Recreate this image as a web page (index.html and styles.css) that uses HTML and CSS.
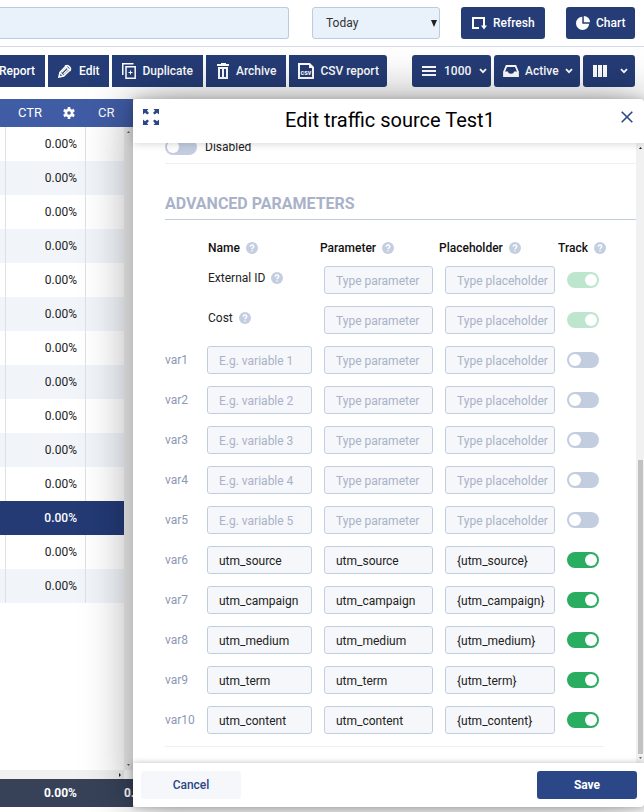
FILE: index.html
```
<!DOCTYPE html>
<html lang="en">
<head>
<meta charset="utf-8">
<title>Traffic sources</title>
<link rel="stylesheet" href="styles.css">
</head>
<body>
<svg class="sprite" aria-hidden="true">
  <symbol id="help" viewBox="0 0 12 12"><circle cx="6" cy="6" r="6" fill="#c3cfe1"/><path d="M4.2 4.7C4.2 2.4 7.8 2.5 7.8 4.6C7.8 5.9 6 5.9 6 7.3M6 8.3V9.5" fill="none" stroke="#fff" stroke-width="1.3"/></symbol>
  <symbol id="chevron" viewBox="0 0 8 6"><path d="M1 1.2L4 4.2L7 1.2" fill="none" stroke="currentColor" stroke-width="1.8"/></symbol>
</svg>

<header class="filters">
  <input class="search" type="text" aria-label="Search">
  <div class="period">
    <select aria-label="Period"><option>Today</option></select>
    <svg class="period-arrow" width="6" height="7" viewBox="0 0 6 7"><path d="M0 0H6L3 7Z" fill="#222"/></svg>
  </div>
  <button class="btn btn-refresh" type="button">
    <svg width="16" height="16" viewBox="0 0 16 16"><path d="M8 13H2V3H13V11" fill="none" stroke="#fff" stroke-width="2"/><path d="M10 10.500H16L13 14.500Z" fill="#fff"/></svg>
    Refresh
  </button>
  <button class="btn btn-chart" type="button">
    <svg width="14" height="14" viewBox="0 0 14 14"><path d="M6.300 .8A6.600 6.600 0 1 0 13.200 7.700H6.300Z" fill="#fff"/><path d="M7.800 0A6.200 6.200 0 0 1 14 6.200H7.800Z" fill="#fff"/></svg>
    Chart
  </button>
</header>

<nav class="toolbar" aria-label="Actions">
  <div class="group">
    <button class="btn btn-report" type="button">Report</button>
    <button class="btn btn-square btn-edit" type="button">
      <svg width="14" height="14" viewBox="0 0 14 14"><path d="M1 13L2 8.300L8.300 1.800C9.500 .6 13.400 4 12.200 5.700L5.700 12Z" fill="none" stroke="#fff" stroke-width="1.600"/><path d="M3.500 8.500L9 3M5.500 10L10.800 4.700M7 1.500L12.500 7M2 8.500L5.500 12" fill="none" stroke="#fff" stroke-width="1.200"/></svg>
      Edit
    </button>
    <button class="btn btn-square" type="button">
      <svg width="14" height="16" viewBox="0 0 14 16"><path d="M.75 12V.75H11.500M4 3.800H13.200V15.200H4Z" fill="none" stroke="#fff" stroke-width="1.500"/><path d="M8.500 7.500V11.500M6.500 9.500H10.500" stroke="#fff"/></svg>
      Duplicate
    </button>
    <button class="btn btn-square" type="button">
      <svg width="14" height="16" viewBox="0 0 14 16"><path d="M5 0H10V1H13V3H1V1H5ZM2 4H12V16H2ZM4 6V14H6V6ZM8 6V14H10V6Z" fill="#fff" fill-rule="evenodd"/></svg>
      Archive
    </button>
    <button class="btn btn-csv" type="button">
      <svg width="16" height="16" viewBox="0 0 16 16"><path d="M1 1H11.500L15 4.500V15H1Z" fill="none" stroke="#fff" stroke-width="2"/><path d="M11 1V5H15Z" fill="#fff"/><text class="csv-text" x="8" y="12">csv</text></svg>
      CSV report
    </button>
  </div>
  <div class="group">
    <button class="btn btn-rows" type="button">
      <svg width="14" height="12" viewBox="0 0 14 12"><path d="M0 2H14M0 6H14M0 10H14" stroke="#fff" stroke-width="2"/></svg>
      1000
      <svg class="chev" width="8" height="6"><use href="#chevron"/></svg>
    </button>
    <button class="btn btn-active" type="button">
      <svg width="16" height="12" viewBox="0 0 16 12"><path d="M3.500 1H12.500L15 7V11H1V7Z" fill="none" stroke="#fff" stroke-width="1.800"/><path d="M1 6.500H5C5 9.500 11 9.500 11 6.500H15V11.500H1Z" fill="#fff"/></svg>
      Active
      <svg class="chev" width="8" height="6"><use href="#chevron"/></svg>
    </button>
    <button class="btn btn-columns" type="button" aria-label="Columns">
      <svg width="14" height="12" viewBox="0 0 14 12"><path d="M2 0V12M7 0V12M12 0V12" stroke="#fff" stroke-width="4"/></svg>
      <svg class="chev" width="8" height="6"><use href="#chevron"/></svg>
    </button>
  </div>
</nav>

<main class="stage">
  <section class="grid-panel">
    <div class="grid-clip head-clip">
      <table class="data">
        <thead><tr><th class="lead"></th><th>CTR
          <svg class="gear" width="12" height="12" viewBox="0 0 12 12"><circle cx="6" cy="6" r="3.100" fill="none" stroke="#fff" stroke-width="2.600"/><path d="M6 0V2.500M6 9.500V12M.8 3L3 4.250M9 7.750L11.200 9M.8 9L3 7.750M9 4.250L11.200 3" stroke="#fff" stroke-width="2.600"/></svg></th><th>CR</th></tr></thead>
      </table>
    </div>
    <div class="grid-view">
      <div class="grid-clip">
        <table class="data">
          <tbody>
            <tr><td class="lead"></td><td>0.00%</td><td>0.00%</td></tr>
            <tr><td class="lead"></td><td>0.00%</td><td>0.00%</td></tr>
            <tr><td class="lead"></td><td>0.00%</td><td>0.00%</td></tr>
            <tr><td class="lead"></td><td>0.00%</td><td>0.00%</td></tr>
            <tr><td class="lead"></td><td>0.00%</td><td>0.00%</td></tr>
            <tr><td class="lead"></td><td>0.00%</td><td>0.00%</td></tr>
            <tr><td class="lead"></td><td>0.00%</td><td>0.00%</td></tr>
            <tr><td class="lead"></td><td>0.00%</td><td>0.00%</td></tr>
            <tr><td class="lead"></td><td>0.00%</td><td>0.00%</td></tr>
            <tr><td class="lead"></td><td>0.00%</td><td>0.00%</td></tr>
            <tr><td class="lead"></td><td>0.00%</td><td>0.00%</td></tr>
            <tr class="selected"><td class="lead"></td><td>0.00%</td><td>0.00%</td></tr>
            <tr><td class="lead"></td><td>0.00%</td><td>0.00%</td></tr>
            <tr><td class="lead"></td><td>0.00%</td><td>0.00%</td></tr>
          </tbody>
        </table>
      </div>
      <div class="rail rail-v">
        <svg width="3" height="2" viewBox="0 0 3 2"><path d="M0 2L1.500 0L3 2Z" fill="#666"/></svg>
        <svg width="3" height="2" viewBox="0 0 3 2"><path d="M0 0L1.500 2L3 0Z" fill="#666"/></svg>
      </div>
      <div class="rail rail-h"><svg width="2" height="4" viewBox="0 0 2 4"><path d="M0 0L2 2L0 4Z" fill="#222"/></svg></div>
    </div>
    <div class="grid-clip foot-clip">
      <table class="data">
        <tfoot><tr><td class="lead"></td><td>0.00%</td><td>0.00%</td></tr></tfoot>
      </table>
    </div>
  </section>

  <section class="dialog" role="dialog" aria-labelledby="dialog-title">
    <header class="dialog-head">
      <button class="icon-btn" type="button" aria-label="Expand">
        <svg width="16" height="16" viewBox="0 0 16 16"><g fill="#2c4788"><path d="M0 0H5.500L4 1.700L6 3.900L4.300 5.600L2 3.800L0 5.500Z"/><path d="M16 0H10.500L12 1.700L10 3.900L11.700 5.600L14 3.800L16 5.500Z"/><path d="M0 16H5.500L4 14.300L6 12.100L4.300 10.400L2 12.200L0 10.500Z"/><path d="M16 16H10.500L12 14.300L10 12.100L11.700 10.400L14 12.200L16 10.500Z"/></g></svg>
      </button>
      <h1 id="dialog-title">Edit traffic source Test1</h1>
      <button class="icon-btn" type="button" aria-label="Close">
        <svg width="12" height="12" viewBox="0 0 12 12"><path d="M.7 .7L11.300 11.300M11.300 .7L.7 11.300" stroke="#2c4788" stroke-width="1.600"/></svg>
      </button>
    </header>

    <div class="dialog-body">
      <form class="content" id="source-form">
        <label class="switch-row"><input class="switch" type="checkbox">Disabled</label>
        <h2>ADVANCED PARAMETERS</h2>
        <div class="columns">
          <span>Name <svg width="12" height="12"><use href="#help"/></svg></span>
          <span>Parameter <svg width="12" height="12"><use href="#help"/></svg></span>
          <span>Placeholder <svg width="12" height="12"><use href="#help"/></svg></span>
          <span>Track <svg width="12" height="12"><use href="#help"/></svg></span>
        </div>
        <div class="params">
          <div class="param"><span class="fixed-name">External ID <svg width="12" height="12"><use href="#help"/></svg></span><input type="text" placeholder="Type parameter" aria-label="External ID parameter"><input type="text" placeholder="Type placeholder" aria-label="External ID placeholder"><input class="switch" type="checkbox" checked disabled aria-label="Track External ID"></div>
          <div class="param"><span class="fixed-name">Cost <svg width="12" height="12"><use href="#help"/></svg></span><input type="text" placeholder="Type parameter" aria-label="Cost parameter"><input type="text" placeholder="Type placeholder" aria-label="Cost placeholder"><input class="switch" type="checkbox" checked disabled aria-label="Track Cost"></div>
          <div class="param"><label for="v1">var1</label><input id="v1" type="text" placeholder="E.g. variable 1"><input type="text" placeholder="Type parameter" aria-label="var1 parameter"><input type="text" placeholder="Type placeholder" aria-label="var1 placeholder"><input class="switch" type="checkbox" aria-label="Track var1"></div>
          <div class="param"><label for="v2">var2</label><input id="v2" type="text" placeholder="E.g. variable 2"><input type="text" placeholder="Type parameter" aria-label="var2 parameter"><input type="text" placeholder="Type placeholder" aria-label="var2 placeholder"><input class="switch" type="checkbox" aria-label="Track var2"></div>
          <div class="param"><label for="v3">var3</label><input id="v3" type="text" placeholder="E.g. variable 3"><input type="text" placeholder="Type parameter" aria-label="var3 parameter"><input type="text" placeholder="Type placeholder" aria-label="var3 placeholder"><input class="switch" type="checkbox" aria-label="Track var3"></div>
          <div class="param"><label for="v4">var4</label><input id="v4" type="text" placeholder="E.g. variable 4"><input type="text" placeholder="Type parameter" aria-label="var4 parameter"><input type="text" placeholder="Type placeholder" aria-label="var4 placeholder"><input class="switch" type="checkbox" aria-label="Track var4"></div>
          <div class="param"><label for="v5">var5</label><input id="v5" type="text" placeholder="E.g. variable 5"><input type="text" placeholder="Type parameter" aria-label="var5 parameter"><input type="text" placeholder="Type placeholder" aria-label="var5 placeholder"><input class="switch" type="checkbox" aria-label="Track var5"></div>
          <div class="param"><label for="v6">var6</label><input id="v6" type="text" value="utm_source"><input type="text" value="utm_source" aria-label="var6 parameter"><input type="text" value="{utm_source}" aria-label="var6 placeholder"><input class="switch" type="checkbox" checked aria-label="Track var6"></div>
          <div class="param"><label for="v7">var7</label><input id="v7" type="text" value="utm_campaign"><input type="text" value="utm_campaign" aria-label="var7 parameter"><input type="text" value="{utm_campaign}" aria-label="var7 placeholder"><input class="switch" type="checkbox" checked aria-label="Track var7"></div>
          <div class="param"><label for="v8">var8</label><input id="v8" type="text" value="utm_medium"><input type="text" value="utm_medium" aria-label="var8 parameter"><input type="text" value="{utm_medium}" aria-label="var8 placeholder"><input class="switch" type="checkbox" checked aria-label="Track var8"></div>
          <div class="param"><label for="v9">var9</label><input id="v9" type="text" value="utm_term"><input type="text" value="utm_term" aria-label="var9 parameter"><input type="text" value="{utm_term}" aria-label="var9 placeholder"><input class="switch" type="checkbox" checked aria-label="Track var9"></div>
          <div class="param"><label for="v10">var10</label><input id="v10" type="text" value="utm_content"><input type="text" value="utm_content" aria-label="var10 parameter"><input type="text" value="{utm_content}" aria-label="var10 placeholder"><input class="switch" type="checkbox" checked aria-label="Track var10"></div>
        </div>
      </form>
      <div class="scrollbar">
        <svg width="3" height="2" viewBox="0 0 3 2"><path d="M0 2L1.500 0L3 2Z" fill="#222"/></svg>
        <span class="thumb"></span>
        <svg width="3" height="2" viewBox="0 0 3 2"><path d="M0 0L1.500 2L3 0Z" fill="#666"/></svg>
      </div>
    </div>

    <footer class="dialog-foot">
      <button class="cancel" type="button">Cancel</button>
      <button class="save" type="submit" form="source-form">Save</button>
    </footer>
  </section>
</main>
</body>
</html>
```
FILE: styles.css
```
* { box-sizing: border-box; }

body {
  margin: 0;
  height: 100vh;
  display: flex;
  flex-direction: column;
  overflow: hidden;
  background: #fff;
  color: #222;
  font: 12px/16px Roboto, "Liberation Sans", sans-serif;
}

button, input, select { margin: 0; font: inherit; color: inherit; }
svg { display: block; flex: none; }
.sprite { position: absolute; width: 0; height: 0; }

/* Filter bar */
.filters {
  display: flex;
  padding: 7px 9px 7px 0;
  border-bottom: 1px solid #d5dce8;
}
.search, .period select {
  height: 32px;
  border: 1px solid #bccbe0;
  border-radius: 3px;
  background: #e9f1fa;
}
.search { flex: 1; min-width: 0; margin-right: 23px; border-left: 0; border-radius: 0 3px 3px 0; }
.period { position: relative; width: 128px; margin-right: 21px; }
.period select { width: 100%; padding: 0 13px; appearance: none; color: #333; }
.period-arrow { position: absolute; right: 3px; top: 13px; pointer-events: none; }

.btn {
  display: flex;
  align-items: center;
  gap: 6px;
  height: 32px;
  padding: 0 10px;
  border: 0;
  border-radius: 3px;
  background: #253c76;
  color: #fff;
  font-weight: 500;
  white-space: nowrap;
}
.btn-refresh { width: 84px; margin-right: 21px; }
.btn-chart { width: 69px; }

/* Toolbar */
.toolbar {
  display: flex;
  justify-content: space-between;
  padding: 8px 9px 12px 0;
}
.group { display: flex; gap: 3px; }
.btn-report { width: 45px; padding-left: 0; justify-content: flex-end; border-radius: 0; }
.btn-square { border-radius: 0; }
.btn-edit { gap: 7px; }
.btn-csv { padding: 0 8px 0 9px; border-radius: 0 3px 3px 0; }
.btn-rows { width: 79px; gap: 8px; }
.btn-active { width: 86px; padding-left: 9px; }
.btn-columns { width: 52px; }
.chev { margin-left: auto; margin-right: -3px; }
.csv-text { font-size: 7px; font-weight: 700; text-anchor: middle; fill: #fff; }

/* Data grid */
.stage { flex: 1; min-height: 0; display: flex; margin-bottom: 5px; }
.grid-panel { flex: 0 0 133px; min-width: 0; display: flex; flex-direction: column; }
.grid-clip { overflow: hidden; min-width: 0; }
.data { width: 166px; border-collapse: separate; border-spacing: 0; table-layout: fixed; }
.data th, .data td { width: 80px; height: 34px; padding: 0 8px; text-align: right; }
.data .lead { width: 6px; padding: 0; }
.data td { border-right: 1px solid #dde1e6; }
.data tbody tr:nth-child(even) { background: #f1f5fa; }
.data tbody tr.selected { background: #233a75; color: #fff; font-weight: 500; }
.data tr.selected td { border-color: transparent; }
.head-clip { background: #405ca5; }
.data thead th { height: 28px; padding: 0 12px; color: #fff; font-weight: 400; font-size: 13px; text-align: left; }
.gear { float: right; margin: 2px -1px 0 0; }
.foot-clip { background: #374259; }
.data tfoot td { height: 28px; padding-right: 9px; border: 0; color: #fff; font-weight: 700; }
.grid-view {
  flex: 1;
  min-height: 0;
  display: grid;
  grid-template: 1fr 9px / 1fr 9px;
}
.rail { display: flex; background: #f1f1f1; align-items: center; }
.rail-v { flex-direction: column; justify-content: space-between; padding: 4px 0; }
.rail-h { justify-content: flex-end; padding-right: 3px; }

/* Dialog */
.dialog {
  position: relative;
  z-index: 1;
  flex: 1;
  min-width: 0;
  display: flex;
  flex-direction: column;
  border-radius: 4px;
  background: #fff;
  box-shadow: 0 0 50px rgba(0, 0, 0, .4);
}
.dialog-head, .dialog-foot {
  position: relative;
  z-index: 1;
  display: flex;
  justify-content: space-between;
  height: 44px;
  background: #fff;
}
.dialog-head { padding: 0 11px 0 10px; border-radius: 4px 4px 0 0; box-shadow: 0 0 10px rgba(0, 0, 0, .2); }
.dialog-head h1 { margin: 0; color: #000; font-size: 20px; font-weight: 400; line-height: 42px; }
.icon-btn { display: flex; align-items: center; height: 36px; padding: 0; border: 0; background: none; }

.dialog-body { flex: 1; min-height: 0; display: flex; overflow: hidden; }
.content {
  flex: 1;
  min-width: 0;
  display: flex;
  flex-direction: column;
  justify-content: flex-end;
  padding: 0 0 16px 32px;
}
.switch-row {
  display: flex;
  gap: 8px;
  padding-bottom: 8px;
  border-bottom: 1px solid #eff0f2;
}
.content h2 {
  margin: 29px 0 20px;
  padding: 1px 0 5px;
  border-bottom: 1px solid #c0cee0;
  color: #a9b2c8;
  font-size: 16px;
  font-weight: 700;
  line-height: 20px;
}
.columns {
  display: grid;
  grid-template-columns: 112fr 119fr 119fr 46px;
  margin: 0 32px 10px 43px;
  color: #111;
  font-weight: 500;
}
.columns span, .fixed-name { display: flex; align-items: center; gap: 6px; white-space: nowrap; }
.params {
  display: grid;
  gap: 12px;
  margin-right: 32px;
  padding-bottom: 12px;
  border-bottom: 1px solid #eff0f6;
}
.param {
  display: grid;
  grid-template-columns: 30px 105fr 109fr 110fr 37px;
  gap: 12px;
  align-items: center;
}
.param label { color: #8d98b5; }
.fixed-name { grid-column: 1 / 3; padding: 0 0 4px 43px; }
.param input[type="text"] {
  width: 100%;
  min-width: 0;
  height: 28px;
  padding: 2px 0 0 11px;
  border: 1px solid #c0cee2;
  border-radius: 3px;
  background: #f5f7fa;
}
.param input::placeholder { color: #a9b2c8; opacity: 1; }

.switch {
  appearance: none;
  width: 32px;
  height: 16px;
  padding: 2px;
  border-radius: 8px;
  background: #c2cddf;
}
.switch::before { content: ""; display: block; width: 12px; height: 12px; border-radius: 6px; background: #fff; }
.switch:checked { background: #29ad60; }
.switch:checked::before { margin-left: auto; }
.switch:disabled { background: #bee6cf; }

.scrollbar {
  display: flex;
  flex-direction: column;
  align-items: center;
  justify-content: space-between;
  width: 8px;
  padding: 4px 0;
  background: #f1f1f1;
}
.thumb { width: 5px; height: 48%; margin: auto 0 3px; background: #c1c1c1; }

.dialog-foot { padding: 8px 7px 8px 8px; border-radius: 0 0 4px 4px; box-shadow: 0 0 6px rgba(0, 0, 0, .25); }
.dialog-foot button { width: 100px; border: 0; border-radius: 3px; font-weight: 500; }
.dialog-foot .cancel { background: #f5f7fa; color: #2c4788; }
.dialog-foot .save { background: #2c4788; color: #fff; font-weight: 700; }
```
